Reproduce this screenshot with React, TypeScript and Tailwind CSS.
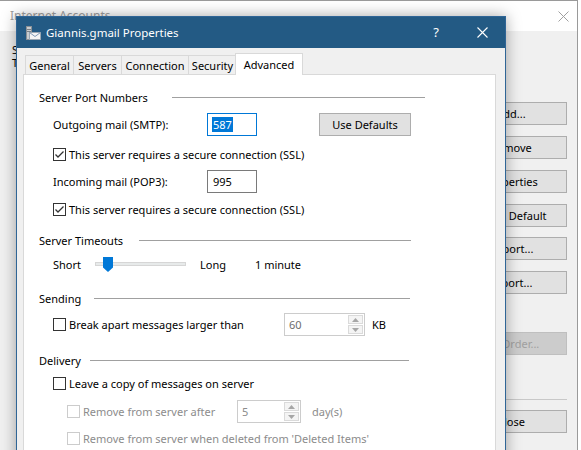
import React from "react";

const FONT = "font-['Noto_Sans','DejaVu_Sans',sans-serif] text-[11px] leading-none";

function Check({ checked, disabled }: { checked?: boolean; disabled?: boolean }) {
  return (
    <span
      className={
        "flex h-[13px] w-[13px] shrink-0 items-center justify-center border bg-white " +
        (disabled ? "border-[#cccccc]" : "border-[#333333]")
      }
    >
      {checked && (
        <svg width="11" height="11" viewBox="0 0 11 11">
          <path d="M1.5 5.5 L4 8 L9.5 2.5" fill="none" stroke="#333333" strokeWidth="1.3" />
        </svg>
      )}
    </span>
  );
}

function CheckRow({
  label,
  checked,
  disabled,
  className = "",
}: {
  label: string;
  checked?: boolean;
  disabled?: boolean;
  className?: string;
}) {
  return (
    <div className={"flex h-[16px] items-center gap-[3px] " + className}>
      <Check checked={checked} disabled={disabled} />
      <span className={disabled ? "text-[#8c8c8c]" : "text-black"}>{label}</span>
    </div>
  );
}

function Header({ label, labelW, lineW, className = "" }: { label: string; labelW: number; lineW: number; className?: string }) {
  return (
    <div className={"flex h-[16px] items-center " + className}>
      <span className="shrink-0 whitespace-nowrap" style={{ width: labelW }}>
        {label}
      </span>
      <div className="h-px bg-[#a0a0a0]" style={{ width: lineW }} />
    </div>
  );
}

function Spinner({ value, width, dim }: { value: string; width: number; dim?: boolean }) {
  return (
    <div className="flex h-[23px] border border-[#cccccc] bg-white" style={{ width }}>
      <span className={"flex flex-1 items-center pl-[4px] " + (dim ? "text-[#8c8c8c]" : "text-[#6d6d6d]")}>{value}</span>
      <div className="my-px mr-px flex w-[15px] flex-col gap-px">
        <div className="flex flex-1 items-center justify-center border border-[#dadada] bg-[#f4f4f4]">
          <svg width="7" height="4" viewBox="0 0 7 4">
            <path d="M0 4 L3.5 0 L7 4 Z" fill="#a6a6a6" />
          </svg>
        </div>
        <div className="flex flex-1 items-center justify-center border border-[#dadada] bg-[#f4f4f4]">
          <svg width="7" height="4" viewBox="0 0 7 4">
            <path d="M0 0 L3.5 4 L7 0 Z" fill="#a6a6a6" />
          </svg>
        </div>
      </div>
    </div>
  );
}

function BgButton({ label, disabled, className = "" }: { label: string; disabled?: boolean; className?: string }) {
  return (
    <div
      className={
        "flex h-[23px] w-[112px] items-center justify-center border " +
        (disabled ? "border-[#bfbfbf] bg-[#cccccc] text-[#a0a0a0]" : "border-[#adadad] bg-[#e1e1e1] text-black") +
        " " +
        className
      }
    >
      {label}
    </div>
  );
}

function TitleIcon() {
  return (
    <svg width="16" height="16" viewBox="0 0 16 16">
      <rect x="1" y="1" width="6" height="14" fill="#8a9095" />
      <rect x="2" y="2" width="4" height="12" fill="#c9cdd0" />
      <rect x="2" y="4" width="4" height="1" fill="#7b8186" />
      <rect x="2" y="6" width="4" height="1" fill="#7b8186" />
      <rect x="4.5" y="7.5" width="11" height="7" fill="#f4f4f4" stroke="#9aa7b3" />
      <path d="M4.5 7.5 L10 11.5 L15.5 7.5" fill="none" stroke="#7e98b5" />
    </svg>
  );
}

function Tab({ label, w, active }: { label: string; w: number; active?: boolean }) {
  return (
    <div
      className={
        "flex items-center justify-center border border-b-0 border-[#d9d9d9] " +
        (active ? "relative z-10 -mx-[2px] -mb-px h-[22px] bg-white" : "-ml-px h-[19px] bg-[#f0f0f0] first:ml-0")
      }
      style={{ width: w }}
    >
      {label}
    </div>
  );
}

export default function App() {
  return (
    <div className={"relative h-[450px] w-[581px] overflow-hidden bg-white " + FONT}>
      {/* background window: Internet Accounts */}
      <div className="absolute left-0 top-0 flex h-[450px] w-[578px] flex-col border-r border-t border-[#9a9a9a]">
        <div className="flex h-[30px] shrink-0 items-center justify-between bg-white pl-[10px] pr-[8px]">
          <span className="text-[12px] text-[#a0a0a0]">Internet Accounts</span>
          <svg width="11" height="11" viewBox="0 0 11 11">
            <path d="M0.5 0.5 L10.5 10.5 M10.5 0.5 L0.5 10.5" stroke="#a0a0a0" strokeWidth="1" />
          </svg>
        </div>
        <div className="flex flex-1 bg-[#f0f0f0]">
          <div className="flex flex-1 flex-col items-start gap-[2px] pl-[12px] pt-[13px] text-black">
            <span className="leading-[11px]">S</span>
            <span className="leading-[11px]">T</span>
          </div>
          <div className="mr-[10px] flex flex-col pt-[71px]">
            <BgButton label="Add..." />
            <BgButton label="Remove" className="mt-[11px]" />
            <BgButton label="Properties" className="mt-[11px]" />
            <BgButton label="Set as Default" className="mt-[11px]" />
            <BgButton label="Import..." className="mt-[10px]" />
            <BgButton label="Export..." className="mt-[11px]" />
            <BgButton label="Set Order..." disabled className="mt-[38px]" />
            <div className="mt-[44px] h-px w-[112px] bg-[#c8c8c8]" />
            <BgButton label="Close" className="mt-[10px]" />
          </div>
        </div>
      </div>

      {/* foreground dialog */}
      <div className="absolute left-[16px] top-[16px] flex h-[450px] w-[490px] flex-col border border-[#2f6596] bg-[#f0f0f0] shadow-[0_0_14px_rgba(0,0,0,0.35)]">
        <div className="flex h-[31px] shrink-0 items-center bg-[#235a84] text-white">
          <div className="ml-[8px] flex items-center gap-[5px]">
            <TitleIcon />
            <span className="text-[11.5px]">Giannis.gmail Properties</span>
          </div>
          <div className="ml-auto flex h-full">
            <div className="flex w-[46px] items-center justify-center text-[13px]">?</div>
            <div className="flex w-[46px] items-center justify-center">
              <svg width="11" height="11" viewBox="0 0 11 11">
                <path d="M0.5 0.5 L10.5 10.5 M10.5 0.5 L0.5 10.5" stroke="#ffffff" strokeWidth="1.1" />
              </svg>
            </div>
          </div>
        </div>

        <div className="ml-[8px] mt-[5px] flex h-[21px] items-end">
          <Tab label="General" w={49} />
          <Tab label="Servers" w={49} />
          <Tab label="Connection" w={68} />
          <Tab label="Security" w={49} />
          <Tab label="Advanced" w={68} active />
        </div>

        <div className="ml-[6px] flex w-[473px] flex-1 flex-col border border-[#d9d9d9] bg-white pl-[15px] pt-[14px] text-black">
          <Header label="Server Port Numbers" labelW={133} lineW={253} />

          <div className="ml-[14px] mt-[8px] flex h-[23px] items-center">
            <span className="w-[154px]">Outgoing mail (SMTP):</span>
            <div className="flex h-[23px] w-[50px] items-center border border-[#0078d7] pl-[4px]">
              <span className="bg-[#0078d7] px-px py-[2px] text-white">587</span>
            </div>
            <div className="ml-[62px] flex h-[23px] w-[92px] items-center justify-center border border-[#adadad] bg-[#e1e1e1]">
              Use Defaults
            </div>
          </div>

          <CheckRow label="This server requires a secure connection (SSL)" checked className="ml-[14px] mt-[10px]" />

          <div className="ml-[14px] mt-[8px] flex h-[23px] items-center">
            <span className="w-[154px]">Incoming mail (POP3):</span>
            <div className="flex h-[23px] w-[50px] items-center border border-[#7a7a7a] pl-[5px]">995</div>
          </div>

          <CheckRow label="This server requires a secure connection (SSL)" checked className="ml-[14px] mt-[8px]" />

          <Header label="Server Timeouts" labelW={100} lineW={272} className="mt-[15px]" />

          <div className="ml-[14px] mt-[8px] flex h-[16px] items-center">
            <span className="w-[42px]">Short</span>
            <div className="relative h-[16px] w-[91px]">
              <div className="absolute left-0 right-0 top-[6px] h-[4px] border border-[#d6d6d6] bg-[#e7eaea]" />
              <svg className="absolute left-[8px] top-[1px]" width="10" height="15" viewBox="0 0 10 15">
                <path d="M0 0 H10 V10.5 L5 15 L0 10.5 Z" fill="#0078d7" />
              </svg>
            </div>
            <span className="ml-[14px] w-[55px]">Long</span>
            <span>1 minute</span>
          </div>

          <Header label="Sending" labelW={55} lineW={316} className="mt-[18px]" />

          <div className="ml-[14px] mt-[7px] flex h-[23px] items-center">
            <div className="flex w-[231px] items-center gap-[3px]">
              <Check />
              <span>Break apart messages larger than</span>
            </div>
            <Spinner value="60" width={81} />
            <span className="ml-[7px]">KB</span>
          </div>

          <Header label="Delivery" labelW={51} lineW={319} className="mt-[16px]" />

          <CheckRow label="Leave a copy of messages on server" className="ml-[14px] mt-[7px]" />

          <div className="ml-[28px] mt-[9px] flex h-[23px] items-center">
            <div className="flex w-[170px] items-center gap-[3px]">
              <Check disabled />
              <span className="text-[#8c8c8c]">Remove from server after</span>
            </div>
            <Spinner value="5" width={64} dim />
            <span className="ml-[11px] text-[#8c8c8c]">day(s)</span>
          </div>

          <CheckRow
            label="Remove from server when deleted from 'Deleted Items'"
            disabled
            className="ml-[28px] mt-[7px]"
          />
        </div>
      </div>
    </div>
  );
}
